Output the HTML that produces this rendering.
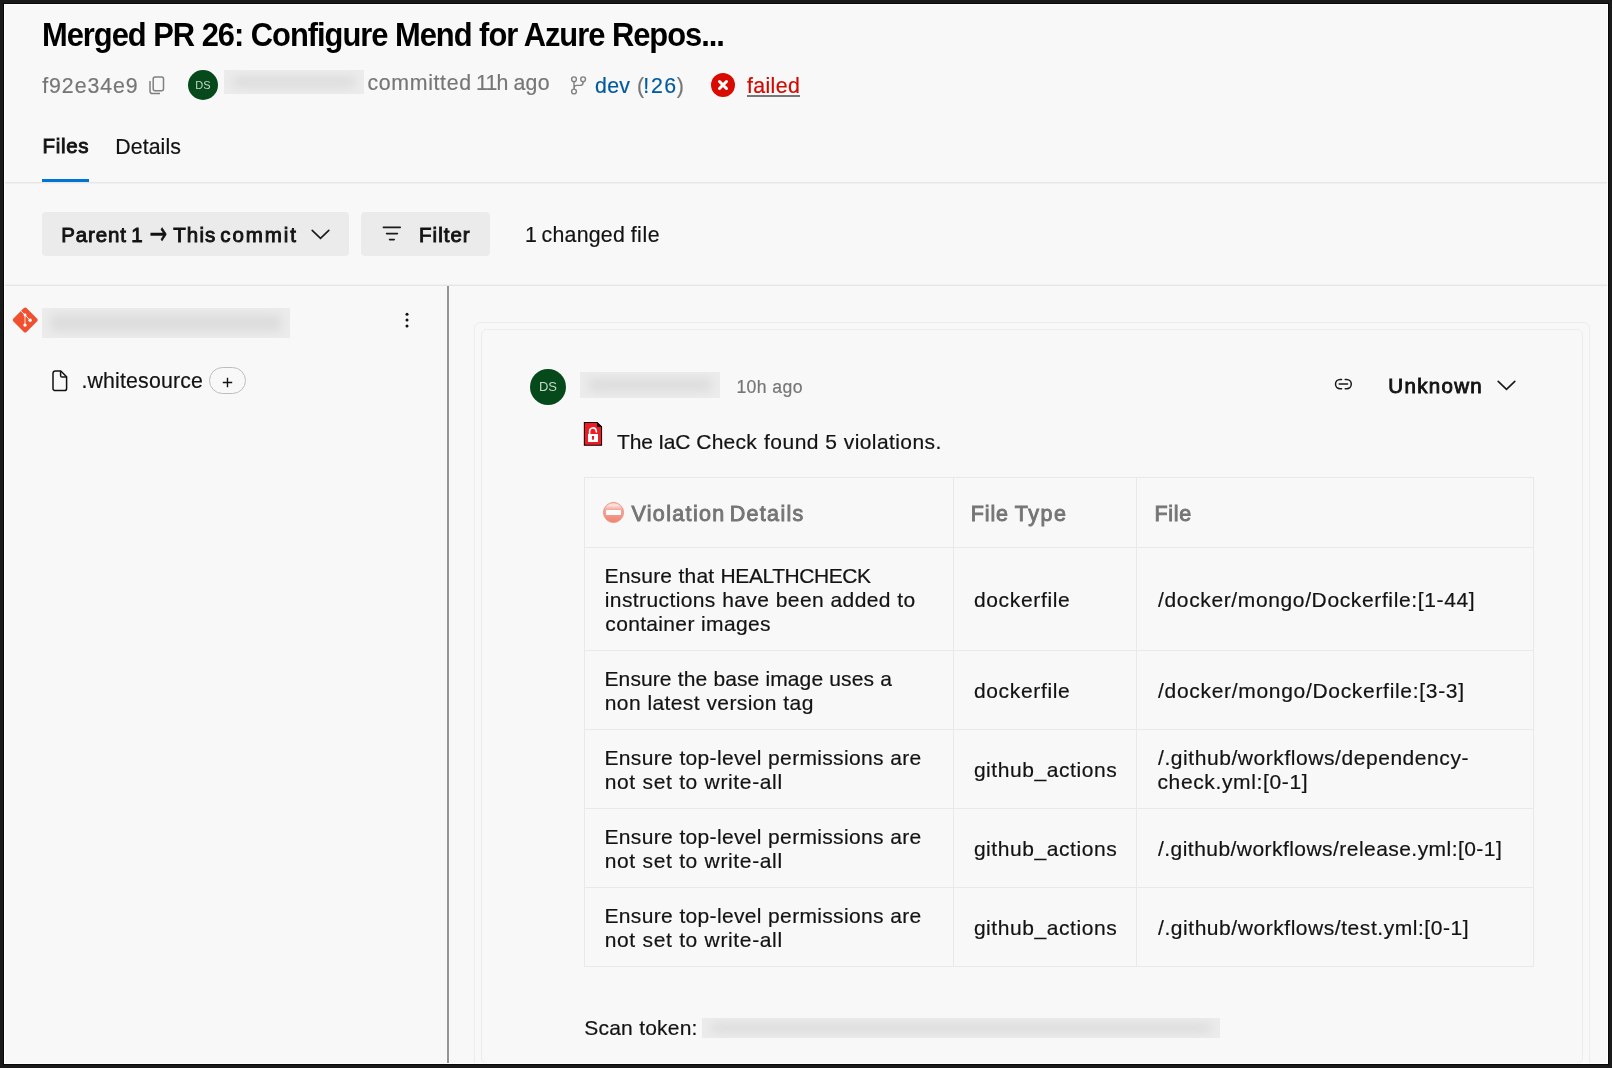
<!DOCTYPE html><html lang="en"><head><meta charset="utf-8"><title>Merged PR 26: Configure Mend for Azure Repos...</title><style>
*{box-sizing:border-box}
html,body{margin:0;padding:0}
body{width:1612px;height:1068px;overflow:hidden;background:#1a1a1a;font-family:'Liberation Sans',sans-serif;color:#131313}
#page{position:absolute;left:4px;top:4px;width:1604px;height:1060px;background:#f8f8f8;overflow:hidden;box-shadow:0 0 0 1px #080808}
#page:after{content:"";position:absolute;left:0;top:0;right:0;bottom:0;border:1px solid #fff;pointer-events:none}
#c{position:absolute;left:-4px;top:-4px;width:1612px;height:1068px;will-change:transform}
.t{position:absolute;margin:0;white-space:pre;line-height:40px;height:40px;font-weight:400;text-decoration:none;display:block}
.abs{position:absolute}
svg{position:absolute;overflow:visible}
.hr{position:absolute;left:4px;width:1604px;height:2px}
.btn{position:absolute;background:#ebebeb;border-radius:4px;height:44px;top:212px;border:0;padding:0;margin:0;font:inherit}
.blur{position:absolute;background:#ececec;overflow:hidden}
.blur i{position:absolute;left:8px;right:8px;top:6px;bottom:6px;background:#dddddd;filter:blur(5px);border-radius:6px}
.av{position:absolute;border-radius:50%;background:#064a1b;color:#c6d8ca;text-align:center}
.card{position:absolute;border:1px solid #ececec;border-radius:6px}
table{position:absolute;left:584px;top:477px;border-collapse:collapse;table-layout:fixed;width:950px}
td,th{position:relative;border:1px solid #e9e9e9;padding:0;font-weight:400;text-align:left}
</style></head><body><div id="page"><div id="c">
<header>
<h1 class="t" style="left:42.02px;top:15px;font-size:32.5px;font-weight:700;transform-origin:0 0;transform:scaleX(0.95);color:#000;letter-spacing:-1.07px;">Merged PR 26: Configure Mend for Azure Repos...</h1>
<span class="t" style="left:42.15px;top:66px;font-size:21.3px;-webkit-text-stroke:0.2px #767676;color:#767676;letter-spacing:0.96px;">f92e34e9</span>
<svg style="left:148px;top:75px" width="18" height="20" viewBox="0 0 18 20" fill="none" stroke="#808080" stroke-width="1.5"><rect x="5.2" y="2" width="10.3" height="13.8" rx="2"/><path d="M2 6v10.3a2.2 2.2 0 0 0 2.2 2.2H12"/></svg>
<div class="av" style="left:188px;top:70px;width:30px;height:30px;font-size:11px;line-height:30px">DS</div>
<div class="blur" style="left:224px;top:70px;width:140px;height:24px"><i></i></div>
<span><span class="t" style="left:367.57px;top:63px;font-size:21.3px;-webkit-text-stroke:0.2px #767676;color:#767676;letter-spacing:0.65px;">committed</span> <span class="t" style="left:475.93px;top:63px;font-size:21.3px;-webkit-text-stroke:0.2px #767676;color:#767676;letter-spacing:-0.77px;">11h</span> <span class="t" style="left:513.40px;top:63px;font-size:21.3px;-webkit-text-stroke:0.2px #767676;color:#767676;letter-spacing:0.35px;">ago</span></span>
<svg style="left:569px;top:75px" width="19" height="21" viewBox="0 0 19 21" fill="none" stroke="#808080" stroke-width="1.4"><circle cx="5" cy="4.3" r="2.4"/><circle cx="14.1" cy="4.3" r="2.4"/><circle cx="5" cy="16.5" r="2.4"/><path d="M5 6.7v7.4M14.1 6.7v0.7a3 3 0 0 1-3 3H8a3 3 0 0 0-3 3"/></svg>
<a class="t" style="left:595.01px;top:66px;font-size:21.3px;-webkit-text-stroke:0.2px #005a9e;color:#005a9e;letter-spacing:0.33px;">dev</a> <span class="t" style="left:637.01px;top:66px;font-size:21.3px;-webkit-text-stroke:0.2px #767676;color:#767676;letter-spacing:0px;">(</span><a class="t" style="left:643.24px;top:66px;font-size:21.3px;-webkit-text-stroke:0.2px #005a9e;color:#005a9e;letter-spacing:0px;">!</a><a class="t" style="left:651.02px;top:66px;font-size:21.3px;-webkit-text-stroke:0.2px #005a9e;color:#005a9e;letter-spacing:1.51px;">26</a><span class="t" style="left:676.72px;top:66px;font-size:21.3px;-webkit-text-stroke:0.2px #767676;color:#767676;letter-spacing:0px;">)</span>
<svg style="left:711px;top:73px" width="24" height="24" viewBox="0 0 24 24"><circle cx="12" cy="12" r="12" fill="#d90b00"/><path d="M8.5 8.5l7 7M15.5 8.5l-7 7" stroke="#fff" stroke-width="3" stroke-linecap="round"/></svg>
<a class="t" style="left:747.05px;top:66px;font-size:21.3px;-webkit-text-stroke:0.2px #d10a00;color:#d10a00;letter-spacing:0.36px;">failed</a>
<div class="abs" style="left:747px;top:95px;width:53px;height:2px;background:#777"></div>
</header>
<nav>
<a class="t" style="left:42.42px;top:126px;font-size:20.5px;-webkit-text-stroke:0.9px #131313;color:#131313;letter-spacing:0.73px;">Files</a>
<a class="t" style="left:115.20px;top:127px;font-size:21.3px;-webkit-text-stroke:0.2px #131313;color:#131313;letter-spacing:0.11px;">Details</a>
<div class="abs" style="left:42px;top:179px;width:47px;height:3px;background:#0074d3"></div>
</nav>
<div class="hr" style="top:182px;background:linear-gradient(#e6e6e6 50%,#f0f0f0 50%)"></div>
<div class="btn" style="left:42px;width:307px"><span class="t" style="left:19.32px;top:3px;font-size:20.5px;-webkit-text-stroke:0.9px #131313;color:#131313;letter-spacing:0.85px;">Parent</span> <span class="t" style="left:89.19px;top:3px;font-size:20.5px;-webkit-text-stroke:0.9px #131313;color:#131313;letter-spacing:0px;">1</span> <span class="t" style="left:107.39px;top:2px;font-size:21px;font-family:'DejaVu Sans',sans-serif;-webkit-text-stroke:0.35px #131313;color:#131313;letter-spacing:0px;transform-origin:50% 20.5px;transform:scaleY(1.5);">→</span> <span class="t" style="left:131.20px;top:3px;font-size:20.5px;-webkit-text-stroke:0.9px #131313;color:#131313;letter-spacing:1.14px;">This</span> <span class="t" style="left:178.33px;top:3px;font-size:20.5px;-webkit-text-stroke:0.9px #131313;color:#131313;letter-spacing:1.93px;">commit</span><svg style="left:269.2px;top:17px" width="19" height="11" viewBox="0 0 19 11" fill="none" stroke="#1a1a1a" stroke-width="1.65" stroke-linecap="round"><path d="M1.2 1.4l8.3 8 8.3-8"/></svg></div>
<div class="btn" style="left:361px;width:129px"><svg style="left:21px;top:14px" width="20" height="15" viewBox="0 0 20 15" fill="none" stroke="#1a1a1a" stroke-width="1.65" stroke-linecap="round"><path d="M1.4 1.4h16.8M4.6 7.6h10.8M7.6 13.6h4.6"/></svg><span class="t" style="left:58.12px;top:3px;font-size:20.5px;-webkit-text-stroke:0.9px #131313;color:#131313;letter-spacing:0.99px;">Filter</span></div>
<span><span class="t" style="left:524.91px;top:215px;font-size:21.3px;-webkit-text-stroke:0.2px #131313;color:#131313;letter-spacing:0px;">1</span> <span class="t" style="left:541.55px;top:215px;font-size:21.3px;-webkit-text-stroke:0.2px #131313;color:#131313;letter-spacing:0.25px;">changed</span> <span class="t" style="left:630.68px;top:215px;font-size:21.3px;-webkit-text-stroke:0.2px #131313;color:#131313;letter-spacing:0.53px;">file</span></span>
<div class="hr" style="top:284px;background:linear-gradient(#f0f0f0 50%,#e6e6e6 50%)"></div>
<div class="abs" style="left:447px;top:286px;width:2px;height:778px;background:#949494"></div>
<aside>
<svg style="left:12px;top:307px" width="27" height="27" viewBox="0 0 27 27"><rect x="3.8" y="3.6" width="18.8" height="18.8" rx="1.9" transform="rotate(45 13.2 13)" fill="#f05030"/><path d="M9 4.1l4 3.9 5.1 5.2" stroke="#fff" stroke-width="0.95" fill="none"/><path d="M13 8v10" stroke="#fff" stroke-width="1.3" opacity=".6" fill="none"/><g fill="#fff"><circle cx="13" cy="8" r="1.45"/><circle cx="13" cy="18.1" r="1.7"/><circle cx="18.1" cy="13.2" r="1.7"/></g></svg>
<div class="blur" style="left:42px;top:308px;width:248px;height:30px"><i></i></div>
<svg style="left:404px;top:312px" width="6" height="16" viewBox="0 0 6 16" fill="#111"><circle cx="3" cy="2.2" r="1.5"/><circle cx="3" cy="8" r="1.5"/><circle cx="3" cy="13.9" r="1.5"/></svg>
<svg style="left:51px;top:369px" width="18" height="24" viewBox="0 0 18 24" fill="none" stroke="#111" stroke-width="1.5" stroke-linejoin="round"><path d="M4.2 2h5.6l5.8 5.8v11.6a2.2 2.2 0 0 1-2.2 2.2H4.2A2.2 2.2 0 0 1 2 19.4V4.2A2.2 2.2 0 0 1 4.2 2z"/><path d="M9.6 2.2v4.2a1.6 1.6 0 0 0 1.6 1.6h4.2"/></svg>
<span class="t" style="left:81.41px;top:361px;font-size:21.3px;-webkit-text-stroke:0.2px #131313;color:#131313;letter-spacing:0.18px;">.whitesource</span>
<div class="abs" style="left:209px;top:367px;width:37px;height:27px;border:1px solid #bdbdbd;border-radius:14px"><svg style="left:12px;top:9px" width="11" height="11" viewBox="0 0 11 11" stroke="#111" stroke-width="1.4"><path d="M5.5 0.8v9.4M0.8 5.5h9.4"/></svg></div>
</aside>
<main>
<div class="card" style="left:474px;top:322px;width:1116px;height:800px"></div>
<div class="card" style="left:481px;top:329px;width:1102px;height:735px;border-radius:6px"></div>
<div class="av" style="left:530px;top:369px;width:36px;height:36px;font-size:13px;line-height:36px">DS</div>
<div class="blur" style="left:580px;top:372px;width:140px;height:26px"><i></i></div>
<span class="t" style="left:736.41px;top:367px;font-size:17.6px;-webkit-text-stroke:0.2px #767676;word-spacing:0.2px;color:#767676;letter-spacing:0.37px;">10h ago</span>
<svg style="left:1334px;top:378px" width="19" height="12" viewBox="0 0 19 12" fill="none" stroke="#1a1a1a" stroke-width="1.5" stroke-linecap="round"><path d="M7.6 1.5H6.1a4.6 4.6 0 0 0 0 9.2h1.5M11.2 1.5h1.5a4.6 4.6 0 0 1 0 9.2h-1.5M5.2 6.1h8.4"/></svg>
<span class="t" style="left:1388.31px;top:366px;font-size:20.5px;-webkit-text-stroke:0.9px #131313;color:#131313;letter-spacing:1.33px;">Unknown</span>
<svg style="left:1496.7px;top:380px" width="19" height="11" viewBox="0 0 19 11" fill="none" stroke="#1a1a1a" stroke-width="1.65" stroke-linecap="round"><path d="M1.2 1.4l8.3 8 8.3-8"/></svg>
<svg style="left:583px;top:421px" width="20" height="26" viewBox="0 0 20 26"><path d="M1.35 1.45H14.2l4.35 4.3v18.5H1.35z" fill="#ee1c25" stroke="#fff" stroke-width="2.6" stroke-linejoin="round" opacity=".9"/><path d="M1.35 1.45H14.2l4.35 4.3v18.5H1.35z" fill="#ee1c25" stroke="#0a0000" stroke-width="1.1" stroke-linejoin="miter"/><path d="M14 1.2v4.8h4.8z" fill="#0a0000"/><path d="M6.6 13.4V10.2a3.3 3.3 0 0 1 6.5-0.8l0.3 1.5" fill="none" stroke="#fff" stroke-width="1.6" stroke-linecap="round"/><rect x="5" y="13" width="10" height="8" fill="#fff"/><path d="M8.9 14.9h2.2l-0.3 3.9H9.2z" fill="#e8131f"/></svg>
<p style="margin:0"><span class="t" style="left:617.12px;top:422px;font-size:21px;-webkit-text-stroke:0.2px #131313;color:#131313;letter-spacing:-0.14px;">The</span> <span class="t" style="left:658.37px;top:422px;font-size:21px;-webkit-text-stroke:0.2px #131313;color:#131313;letter-spacing:-0.36px;">IaC</span> <span class="t" style="left:696.24px;top:422px;font-size:21px;-webkit-text-stroke:0.2px #131313;color:#131313;letter-spacing:0.26px;">Check</span> <span class="t" style="left:763.91px;top:422px;font-size:21px;-webkit-text-stroke:0.2px #131313;color:#131313;letter-spacing:0.51px;">found</span> <span class="t" style="left:825.27px;top:422px;font-size:21px;-webkit-text-stroke:0.2px #131313;color:#131313;letter-spacing:0px;">5</span> <span class="t" style="left:843.80px;top:422px;font-size:21px;-webkit-text-stroke:0.2px #131313;color:#131313;letter-spacing:0.41px;">violations.</span></p>
<table><colgroup><col style="width:369px"><col style="width:183px"><col style="width:397px"></colgroup>
<thead><tr style="height:70px">
<th><span class="abs" role="img" aria-label="no entry" style="left:18px;top:24px;width:21px;height:21px;border-radius:50%;border:1px solid #f08f7f;background:linear-gradient(#f9d3cd 0%,#fbe2de 12%,#f4a699 36%,#f29c8d 60%,#ee8473 100%)"><span class="abs" style="left:2px;top:7.2px;width:15px;height:4.7px;border-radius:0.6px;background:#fafcfc"></span></span><span class="t" style="left:46.44px;top:16px;font-size:21.5px;-webkit-text-stroke:0.9px #757575;color:#757575;letter-spacing:1.35px;">Violation</span> <span class="t" style="left:144.68px;top:16px;font-size:21.5px;-webkit-text-stroke:0.9px #757575;color:#757575;letter-spacing:1.33px;">Details</span></th>
<th><span class="t" style="left:16.75px;top:16px;font-size:21.5px;-webkit-text-stroke:0.9px #757575;color:#757575;letter-spacing:0.86px;">File</span> <span class="t" style="left:60.85px;top:16px;font-size:21.5px;-webkit-text-stroke:0.9px #757575;color:#757575;letter-spacing:1.49px;">Type</span></th>
<th><span class="t" style="left:17.55px;top:16px;font-size:21.5px;-webkit-text-stroke:0.9px #757575;color:#757575;letter-spacing:0.69px;">File</span></th>
</tr></thead><tbody>
<tr style="height:103px">
<td><span class="t l" style="left:19.52px;top:8px;font-size:21px;-webkit-text-stroke:0.2px #131313;word-spacing:0.2px;color:#131313;letter-spacing:0.2px;">Ensure that</span> <span class="t l" style="left:135.62px;top:8px;font-size:21px;-webkit-text-stroke:0.2px #131313;color:#131313;letter-spacing:-0.43px;">HEALTHCHECK</span> <span class="t l" style="left:19.76px;top:32px;font-size:21px;-webkit-text-stroke:0.2px #131313;word-spacing:0.2px;color:#131313;letter-spacing:0.4px;">instructions have been added to</span> <span class="t l" style="left:20.35px;top:56px;font-size:21px;-webkit-text-stroke:0.2px #131313;word-spacing:0.2px;color:#131313;letter-spacing:0.33px;">container images</span></td>
<td><span class="t l" style="left:19.88px;top:32px;font-size:21px;-webkit-text-stroke:0.2px #131313;color:#131313;letter-spacing:0.67px;">dockerfile</span></td>
<td><span class="t l" style="left:21.05px;top:32px;font-size:21px;-webkit-text-stroke:0.2px #131313;color:#131313;letter-spacing:0.63px;">/docker/mongo/Dockerfile:[1-44]</span></td>
</tr>
<tr style="height:79px">
<td><span class="t l" style="left:19.52px;top:8px;font-size:21px;-webkit-text-stroke:0.2px #131313;word-spacing:0.2px;color:#131313;letter-spacing:0.1px;">Ensure the base image uses a</span> <span class="t l" style="left:19.74px;top:32px;font-size:21px;-webkit-text-stroke:0.2px #131313;word-spacing:0.2px;color:#131313;letter-spacing:0.4px;">non latest version tag</span></td>
<td><span class="t l" style="left:19.88px;top:20px;font-size:21px;-webkit-text-stroke:0.2px #131313;color:#131313;letter-spacing:0.67px;">dockerfile</span></td>
<td><span class="t l" style="left:21.05px;top:20px;font-size:21px;-webkit-text-stroke:0.2px #131313;color:#131313;letter-spacing:0.69px;">/docker/mongo/Dockerfile:[3-3]</span></td>
</tr>
<tr style="height:79px">
<td><span class="t l" style="left:19.52px;top:8px;font-size:21px;-webkit-text-stroke:0.2px #131313;word-spacing:0.2px;color:#131313;letter-spacing:0.33px;">Ensure top-level permissions are</span> <span class="t l" style="left:19.74px;top:32px;font-size:21px;-webkit-text-stroke:0.2px #131313;word-spacing:0.2px;color:#131313;letter-spacing:0.64px;">not set to write-all</span></td>
<td><span class="t l" style="left:19.88px;top:20px;font-size:21px;-webkit-text-stroke:0.2px #131313;color:#131313;letter-spacing:0.57px;">github_actions</span></td>
<td><span class="t l" style="left:21.05px;top:8px;font-size:21px;-webkit-text-stroke:0.2px #131313;color:#131313;letter-spacing:0.56px;">/.github/workflows/dependency-</span><span class="t l" style="left:20.45px;top:32px;font-size:21px;-webkit-text-stroke:0.2px #131313;color:#131313;letter-spacing:0.64px;">check.yml:[0-1]</span></td>
</tr>
<tr style="height:79px">
<td><span class="t l" style="left:19.52px;top:8px;font-size:21px;-webkit-text-stroke:0.2px #131313;word-spacing:0.2px;color:#131313;letter-spacing:0.33px;">Ensure top-level permissions are</span> <span class="t l" style="left:19.74px;top:32px;font-size:21px;-webkit-text-stroke:0.2px #131313;word-spacing:0.2px;color:#131313;letter-spacing:0.64px;">not set to write-all</span></td>
<td><span class="t l" style="left:19.88px;top:20px;font-size:21px;-webkit-text-stroke:0.2px #131313;color:#131313;letter-spacing:0.57px;">github_actions</span></td>
<td><span class="t l" style="left:21.05px;top:20px;font-size:21px;-webkit-text-stroke:0.2px #131313;color:#131313;letter-spacing:0.45px;">/.github/workflows/release.yml:[0-1]</span></td>
</tr>
<tr style="height:79px">
<td><span class="t l" style="left:19.52px;top:8px;font-size:21px;-webkit-text-stroke:0.2px #131313;word-spacing:0.2px;color:#131313;letter-spacing:0.33px;">Ensure top-level permissions are</span> <span class="t l" style="left:19.74px;top:32px;font-size:21px;-webkit-text-stroke:0.2px #131313;word-spacing:0.2px;color:#131313;letter-spacing:0.64px;">not set to write-all</span></td>
<td><span class="t l" style="left:19.88px;top:20px;font-size:21px;-webkit-text-stroke:0.2px #131313;color:#131313;letter-spacing:0.57px;">github_actions</span></td>
<td><span class="t l" style="left:21.05px;top:20px;font-size:21px;-webkit-text-stroke:0.2px #131313;color:#131313;letter-spacing:0.55px;">/.github/workflows/test.yml:[0-1]</span></td>
</tr>
</tbody></table>
<span class="t" style="left:584.25px;top:1008px;font-size:21px;-webkit-text-stroke:0.2px #131313;word-spacing:0.2px;color:#131313;letter-spacing:0.2px;">Scan token:</span>
<div class="blur" style="left:702px;top:1018px;width:518px;height:20px"><i style="top:5px;bottom:5px"></i></div>
</main>
</div></div></body></html>
